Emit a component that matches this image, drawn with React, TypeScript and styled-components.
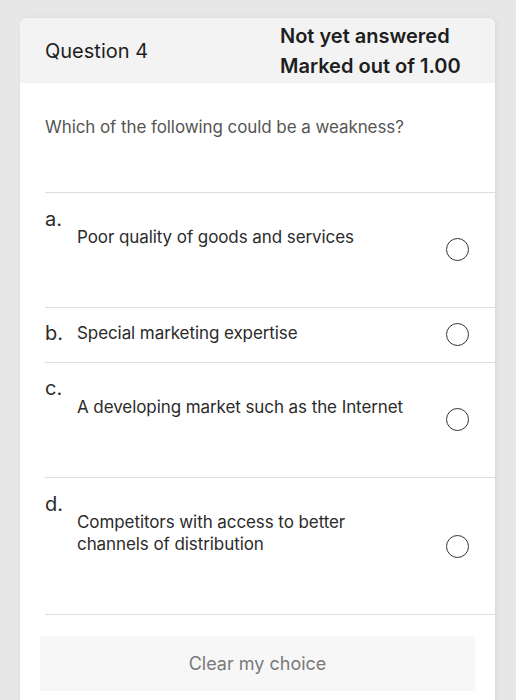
import { FunctionComponent } from 'react';
import styled, { createGlobalStyle } from 'styled-components';

interface IOption {
  letter: string;
  text: string[];
  stacked: boolean;
  labelTop: number;
  textTop: number;
  radioTop: number;
  height: number;
}

const options: IOption[] = [
  {
    letter: 'a.',
    text: ['Poor quality of goods and services'],
    stacked: true,
    labelTop: 14,
    textTop: 33,
    radioTop: 45,
    height: 114
  },
  {
    letter: 'b.',
    text: ['Special marketing expertise'],
    stacked: false,
    labelTop: 13,
    textTop: 14,
    radioTop: 15,
    height: 54
  },
  {
    letter: 'c.',
    text: ['A developing market such as the Internet'],
    stacked: true,
    labelTop: 13,
    textTop: 33,
    radioTop: 45,
    height: 114
  },
  {
    letter: 'd.',
    text: ['Competitors with access to better', 'channels of distribution'],
    stacked: true,
    labelTop: 14,
    textTop: 33,
    radioTop: 57,
    height: 136
  }
];

const GlobalStyle = createGlobalStyle`
  body {
    margin: 0;
    background: #e7e7e7;
    font-family: Inter, "Liberation Sans", Arial, sans-serif;
    -webkit-font-smoothing: antialiased;
  }
`;

const Page = styled.div`
  padding: 18px 0 0 20px;
  height: 682px;
  overflow: hidden;
`;

const Card = styled.div`
  width: 475px;
  background: #fff;
  border-radius: 7px 7px 0 0;
  box-shadow: 2px 0 6px rgba(0, 0, 0, 0.06);
  overflow: hidden;
  padding-bottom: 20px;
`;

const Header = styled.div`
  display: grid;
  grid-template-columns: 235px 1fr;
  align-items: center;
  background: #f3f3f3;
  padding: 3px 0 2px 25px;
  color: #1e1e1e;
`;

const Title = styled.div`
  font-size: 20px;
  font-weight: 400;
`;

const Status = styled.div`
  font-size: 20px;
  font-weight: 600;
  line-height: 30px;
`;

const Body = styled.div`
  padding-left: 25px;
`;

const QuestionText = styled.p`
  margin: 0;
  padding: 33px 0 0;
  height: 76px;
  font-size: 17px;
  line-height: 22px;
  letter-spacing: -0.08px;
  color: #555;
`;

const OptionRow = styled.div<{ $height: number }>`
  display: grid;
  grid-template-columns: 32px 1fr 50px;
  grid-template-rows: auto 1fr;
  min-height: ${(p) => p.$height}px;
  border-top: 1px solid #dedede;
  color: #2b2b2b;
`;

const Letter = styled.span<{ $top: number }>`
  grid-column: 1;
  grid-row: 1;
  margin-top: ${(p) => p.$top}px;
  font-size: 20px;
  line-height: 24px;
`;

const AnswerText = styled.div<{ $top: number; $stacked: boolean }>`
  grid-column: 2;
  grid-row: ${(p) => (p.$stacked ? '1 / span 2' : '1')};
  margin-top: ${(p) => p.$top}px;
  font-size: 17px;
  line-height: 22px;
  letter-spacing: -0.08px;
`;

const Radio = styled.span<{ $top: number }>`
  grid-column: 3;
  grid-row: 1 / span 2;
  margin-top: ${(p) => p.$top}px;
  width: 21px;
  height: 21px;
  border: 1.6px solid #333;
  border-radius: 50%;
  justify-self: start;
  margin-left: 1px;
`;

const Divider = styled.div`
  border-top: 1px solid #dedede;
`;

const ClearButton = styled.button`
  display: block;
  margin: 21px 0 0 -5px;
  width: 435px;
  height: 55px;
  border: none;
  background: #f7f7f7;
  color: #7a7a7a;
  font-family: inherit;
  font-size: 18px;
`;

const App: FunctionComponent = () => {
  return (
    <>
      <GlobalStyle />
      <Page>
        <Card>
          <Header>
            <Title>Question 4</Title>
            <div>
              <Status>Not yet answered</Status>
              <Status>Marked out of 1.00</Status>
            </div>
          </Header>
          <Body>
            <QuestionText>Which of the following could be a weakness?</QuestionText>
            {options.map((o) => (
              <OptionRow key={o.letter} $height={o.height}>
                <Letter $top={o.labelTop}>{o.letter}</Letter>
                <AnswerText $top={o.textTop} $stacked={o.stacked}>
                  {o.text.map((line) => (
                    <div key={line}>{line}</div>
                  ))}
                </AnswerText>
                <Radio $top={o.radioTop} />
              </OptionRow>
            ))}
            <Divider />
            <ClearButton>Clear my choice</ClearButton>
          </Body>
        </Card>
      </Page>
    </>
  );
};

export default App;
